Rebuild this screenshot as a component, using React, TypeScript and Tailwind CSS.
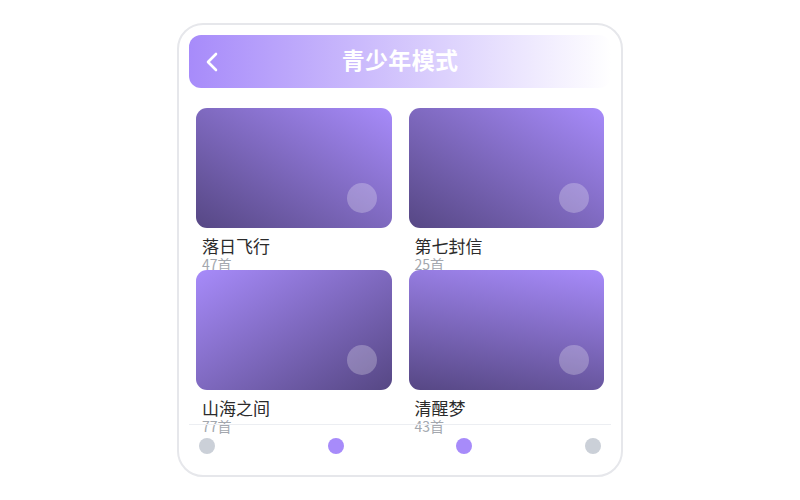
import React from "react";

const items = [
  { title: "落日飞行", count: "47首", grad: "bg-[linear-gradient(to_bottom_left,#a78bfa,#564784)]" },
  { title: "第七封信", count: "25首", grad: "bg-[linear-gradient(to_bottom_left,#a78bfa,#564784)]" },
  { title: "山海之间", count: "77首", grad: "bg-[linear-gradient(to_bottom_right,#a78bfa,#564784)]" },
  { title: "清醒梦", count: "43首", grad: "bg-[linear-gradient(190deg,#a78bfa,#564784)]" },
];

const dots = ["bg-[#cbd0d8]", "bg-[#a78bfa]", "bg-[#a78bfa]", "bg-[#cbd0d8]"];

export default function App() {
  return (
    <div
      className="w-full h-[500px] bg-white flex items-center justify-center"
      style={{ fontFamily: '"Noto Sans", "Noto Sans CJK SC", sans-serif' }}
    >
      <div className="w-[446px] h-[454px] border-2 border-[#e6e7eb] rounded-[26px] flex flex-col">
        <div className="mx-[10px] mt-[10px] h-[53px] rounded-[12px] bg-[linear-gradient(to_right,#a78bfa,#ffffff)] relative flex items-center justify-center pb-[5px]">
          <div className="absolute left-[16px] top-[17px]">
            <svg width="14" height="20" viewBox="0 0 14 20" fill="none">
              <path d="M11 2 L3 10 L11 18" stroke="white" strokeWidth="2.6" strokeLinecap="round" strokeLinejoin="round" />
            </svg>
          </div>
          <span className="text-white font-bold text-[23px] leading-none tracking-[0.3px]" style={{ fontFamily: '"Noto Sans CJK SC", sans-serif' }}>
            青少年模式
          </span>
        </div>
        <div className="flex-1 min-h-0 px-[17px] pt-5">
          <div className="grid grid-cols-2 gap-x-[17px] gap-y-4 auto-rows-[146px]">
            {items.map((it) => (
              <div key={it.title} className="flex flex-col">
                <div className={`h-[120px] rounded-[11px] relative shrink-0 ${it.grad}`}>
                  <div className="absolute right-[15px] bottom-[15px] w-[30px] h-[30px] rounded-full bg-white/25" />
                </div>
                <div className="mt-2 pl-[6px]" style={{ fontFamily: '"Noto Sans CJK SC", sans-serif' }}>
                  <div className="text-[17px] leading-[20px] font-normal text-[#2b2b2b]">{it.title}</div>
                  <div className="text-[14px] leading-[16px] font-normal text-[#a3a7ae]">{it.count}</div>
                </div>
              </div>
            ))}
          </div>
        </div>
        <div className="mx-[10px] mb-[8px] border-t border-[#eceef2] h-[43px] flex items-center justify-between px-[10px]">
          {dots.map((d, i) => (
            <div key={i} className={`w-4 h-4 rounded-full ${d}`} />
          ))}
        </div>
      </div>
    </div>
  );
}
